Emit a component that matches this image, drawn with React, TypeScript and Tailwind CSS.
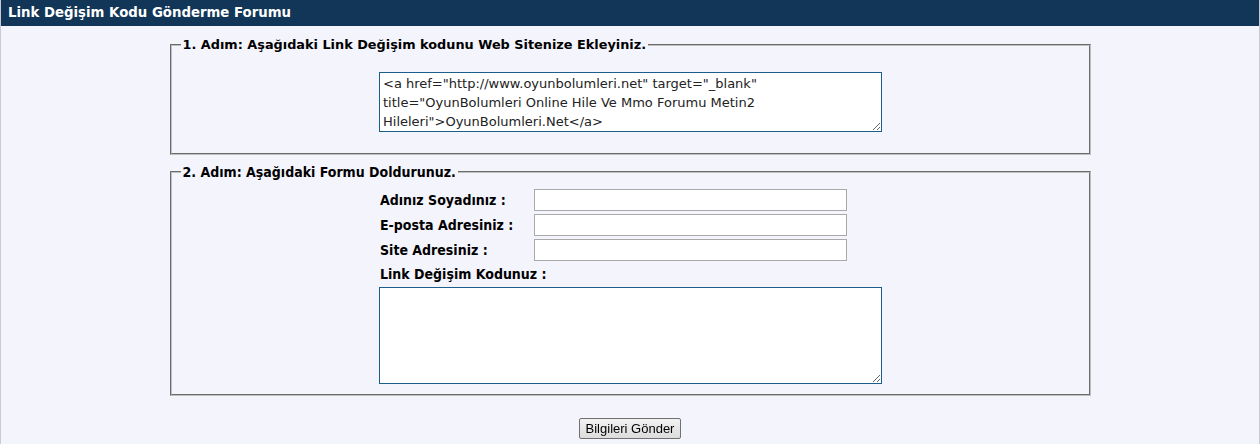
import React from 'react';

const code =
  '<a href="http://www.oyunbolumleri.net" target="_blank" title="OyunBolumleri Online Hile Ve Mmo Forumu Metin2 Hileleri">OyunBolumleri.Net</a>';

const labelCls = "font-['DejaVu_Sans_Condensed','DejaVu_Sans',Tahoma,sans-serif] text-[14px] font-bold text-black";

function Field({ label }: { label: string }) {
  return (
    <div className="flex items-center h-[22px]">
      <span className={`${labelCls} w-[155px] pl-px`}>{label}</span>
      <input
        type="text"
        className="w-[313px] h-[22px] bg-white border border-[#a9a9a9] outline-none"
      />
    </div>
  );
}

export default function App() {
  return (
    <div className="min-h-screen bg-[#f4f4fd] font-['DejaVu_Sans',Verdana,sans-serif] border-x border-[#c9c9d2]">
      <div className="h-[26px] bg-[#113657] flex items-center pl-[7px]">
        <h1 className="text-white text-[13.3px] font-bold leading-none">Link Değişim Kodu Gönderme Forumu</h1>
      </div>

      <div className="w-[921px] mx-auto pt-[12px] pb-8">
        <fieldset className="border-2 [border-style:groove] border-[#c0c0c0] px-[9px] m-0">
          <legend className="px-[2px] text-[12.85px] font-bold leading-[14px] text-black">
            1. Adım: Aşağıdaki Link Değişim kodunu Web Sitenize Ekleyiniz.
          </legend>
          <div className="flex justify-center pl-px pt-[20px] pb-[21px]">
            <textarea
              readOnly
              defaultValue={code}
              className="w-[503px] h-[60px] bg-white border border-[#1b5e8c] px-[3px] py-px font-['DejaVu_Sans',Verdana,sans-serif] text-[13px] leading-[19px] text-[#222] resize-y outline-none"
            />
          </div>
        </fieldset>

        <fieldset className="mt-[10px] border-2 [border-style:groove] border-[#c0c0c0] px-[9px] m-0">
          <legend className={`${labelCls} px-[2px] leading-[14px]`}>2. Adım: Aşağıdaki Formu Doldurunuz.</legend>
          <div className="flex justify-center pl-px pt-[10px] pb-[10px]">
            <div className="w-[503px] flex flex-col gap-[3px]">
              <Field label="Adınız Soyadınız :" />
              <Field label="E-posta Adresiniz :" />
              <Field label="Site Adresiniz :" />
              <div className={`${labelCls} h-[20px] flex items-center pl-px`}>Link Değişim Kodunuz :</div>
              <textarea className="w-[503px] h-[97px] bg-white border border-[#1b5e8c] resize-y outline-none" />
            </div>
          </div>
        </fieldset>

        <div className="flex justify-center pt-[22px]">
          <button
            type="button"
            className="h-[21px] px-[6px] border border-[#707070] rounded-[2px] bg-gradient-to-b from-[#f2f2f2] to-[#dcdcdc] font-['Liberation_Sans',Arial,sans-serif] text-[13px] leading-none text-black"
          >
            Bilgileri Gönder
          </button>
        </div>
      </div>
    </div>
  );
}
